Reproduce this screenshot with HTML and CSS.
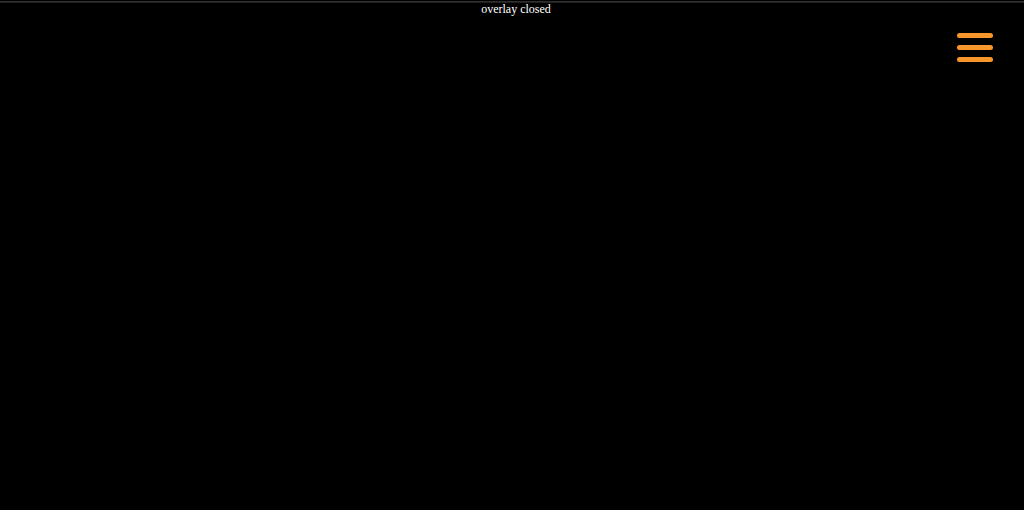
FILE: index.html
```html
<!DOCTYPE html>
<html lang="en">
<head>
    <meta charset="UTF-8">
    <meta name="viewport" content="width=device-width, initial-scale=1.0">
    <title>Overlay Menu</title>
    <link rel="stylesheet" href="styles.css">
</head>
<body>
    <div class="status">overlay closed</div>

    <button class="menu-btn" aria-label="Open menu">
        <span class="bar"></span>
        <span class="bar"></span>
        <span class="bar"></span>
    </button>
</body>
</html>
```

FILE: styles.css
```css
html, body {
    margin: 0;
    padding: 0;
    height: 100%;
    background: #000;
}

body {
    font-family: "Liberation Serif", "Times New Roman", serif;
    color: #fff;
    position: relative;
    overflow: hidden;
}

.status {
    border-top: 1px solid #000;
    box-shadow: inset 0 1px 0 #2e2e2e, inset 0 2px 0 #222;
    text-align: center;
    font-size: 12px;
    line-height: 14px;
    padding-top: 1px;
    padding-left: 8px;
}

.menu-btn {
    position: absolute;
    top: 33px;
    right: 31px;
    width: 36px;
    padding: 0;
    border: none;
    background: none;
    display: flex;
    flex-direction: column;
    gap: 7px;
    cursor: pointer;
}

.bar {
    display: block;
    height: 5px;
    width: 100%;
    border-radius: 3px;
    background: #f7962b;
}
```
